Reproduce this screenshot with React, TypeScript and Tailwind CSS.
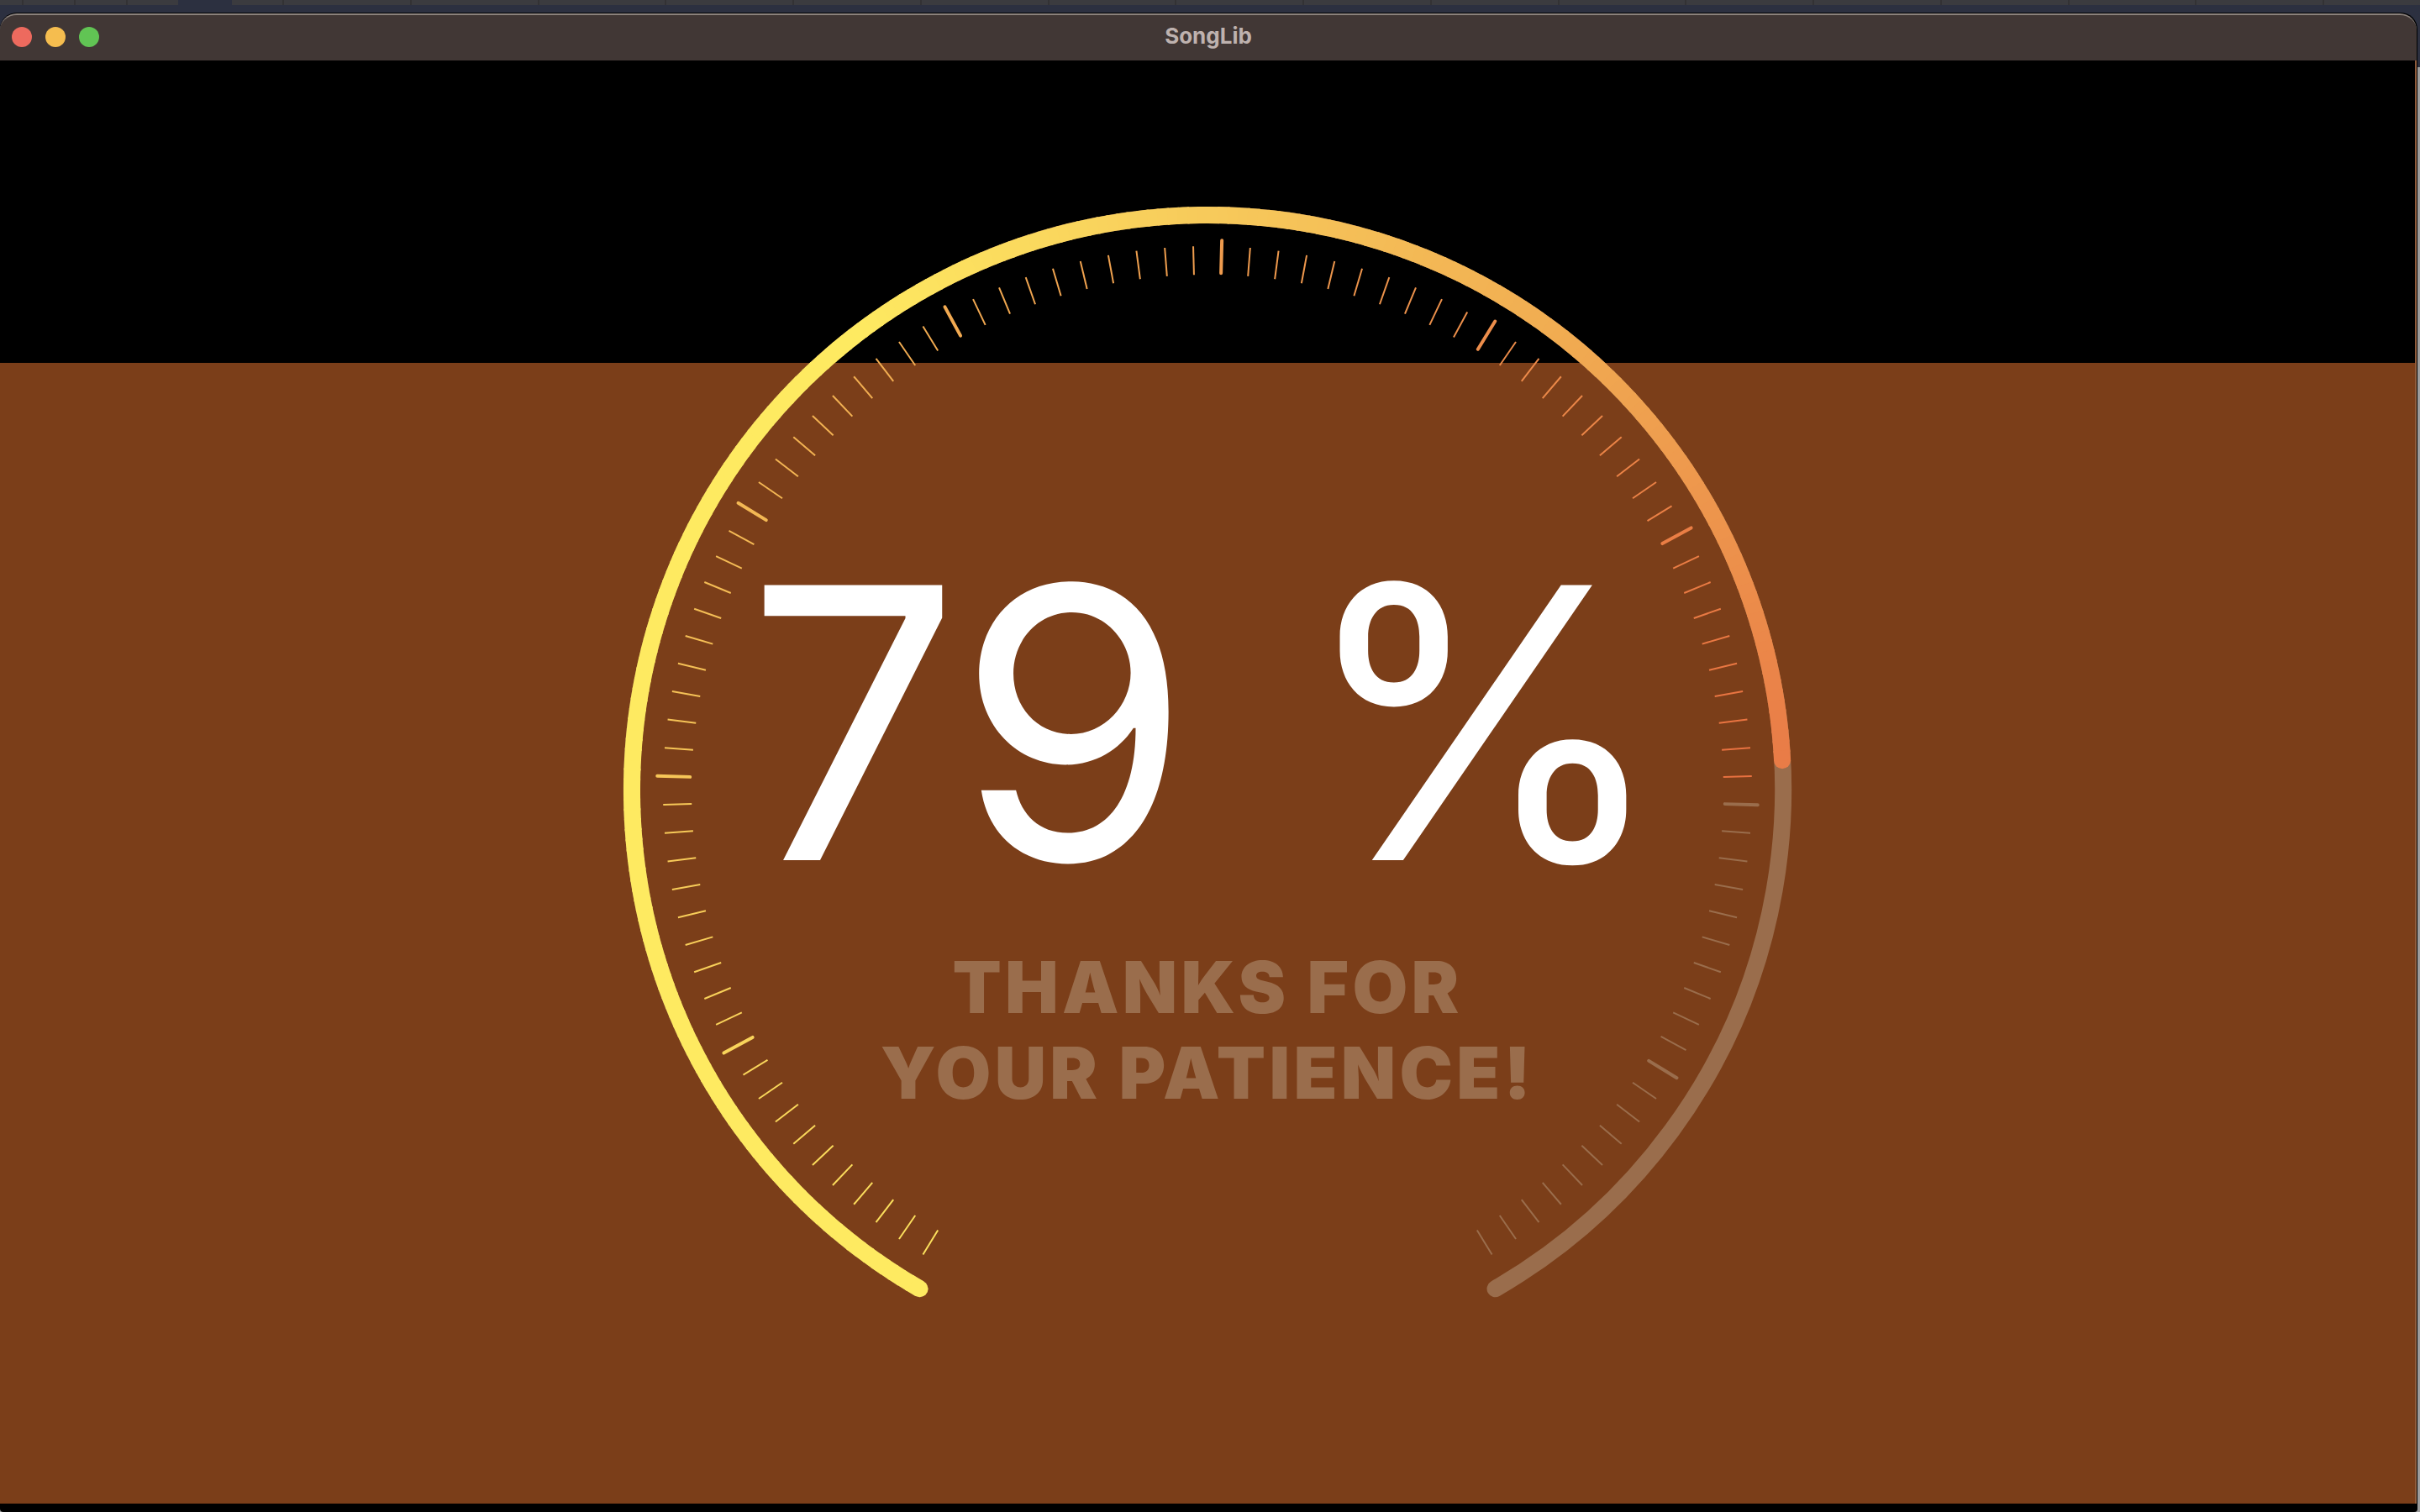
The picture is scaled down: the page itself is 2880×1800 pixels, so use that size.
import React from "react";

type Stop = [number, [number, number, number]];

const CENTER = 700;
const RADIUS = 685;
const PERCENT = 79;
const START = -150;
const SWEEP = 300;

const ARC_STOPS: Stop[] = [
  [-150, [254, 234, 97]],
  [-38, [254, 234, 97]],
  [0, [247, 202, 91]],
  [35, [241, 174, 82]],
  [87, [233, 124, 71]],
];

const TICK_STOPS: Stop[] = [
  [-150, [252, 226, 94]],
  [-90, [246, 199, 88]],
  [-30, [241, 170, 81]],
  [30, [236, 142, 75]],
  [90, [232, 112, 64]],
];

function colorAt(stops: Stop[], angle: number): string {
  for (let i = 1; i < stops.length; i++) {
    const [a0, c0] = stops[i - 1];
    const [a1, c1] = stops[i];
    if (angle <= a1) {
      const t = Math.max(0, (angle - a0) / (a1 - a0));
      const c = c0.map((v, n) => Math.round(v + (c1[n] - v) * t));
      return `rgb(${c.join(",")})`;
    }
  }
  return `rgb(${stops[stops.length - 1][1].join(",")})`;
}

function point(angle: number, r: number): [number, number] {
  const rad = (angle * Math.PI) / 180;
  return [CENTER + r * Math.sin(rad), CENTER - r * Math.cos(rad)];
}

function arc(from: number, to: number): string {
  const [x0, y0] = point(from, RADIUS);
  const [x1, y1] = point(to, RADIUS);
  return `M${x0} ${y0}A${RADIUS} ${RADIUS} 0 ${to - from > 180 ? 1 : 0} 1 ${x1} ${y1}`;
}

function Dial() {
  const end = START + (SWEEP * PERCENT) / 100;
  const segments = Array.from({ length: end - START }, (_, i) => START + i);
  const ticks = Array.from({ length: 100 }, (_, i) => i);
  const [sx, sy] = point(START, RADIUS);
  const [ex, ey] = point(end, RADIUS);

  return (
    <svg viewBox="0 0 1400 1400" className="h-auto w-full [grid-area:1/1]" fill="none" aria-hidden="true">
      <path d={arc(START, START + SWEEP)} stroke="#9a6d4c" strokeWidth="20" strokeLinecap="round" />
      <circle cx={sx} cy={sy} r="10" fill={colorAt(ARC_STOPS, START)} />
      <circle cx={ex} cy={ey} r="10" fill={colorAt(ARC_STOPS, end)} />
      {segments.map((a) => (
        <path key={a} d={arc(a, Math.min(a + 1.2, end))} stroke={colorAt(ARC_STOPS, a + 0.5)} strokeWidth="20" />
      ))}
      {ticks.map((i) => {
        const angle = START + 1.5 + i * 3;
        const major = i > 0 && i % 10 === 0;
        const [x1, y1] = point(angle, major ? 616 : 614);
        const [x2, y2] = point(angle, major ? 655 : 648);
        return (
          <line
            key={i}
            x1={x1}
            y1={y1}
            x2={x2}
            y2={y2}
            stroke={i <= PERCENT ? colorAt(TICK_STOPS, angle) : "#9a6d4c"}
            strokeWidth={major ? 4 : 2}
            strokeLinecap={major ? "round" : "butt"}
          />
        );
      })}
    </svg>
  );
}

function Gauge() {
  return (
    <section
      role="progressbar"
      aria-label="Loading"
      aria-valuenow={PERCENT}
      aria-valuemin={0}
      aria-valuemax={100}
      className="grid w-[1400px] max-w-full"
    >
      <Dial />
      <div className="flex flex-col items-center justify-center gap-10 pt-[84px] text-center [grid-area:1/1]">
        <p className="text-[450px] leading-[448px] whitespace-nowrap text-white">{PERCENT} %</p>
        <p className="text-[85px] leading-[102px] font-black tracking-wider text-[#9a6d4c]">
          THANKS FOR
          <br />
          YOUR PATIENCE!
        </p>
      </div>
    </section>
  );
}

function TitleBar() {
  return (
    <header className="grid h-14 grid-cols-[1fr_auto_1fr] items-center rounded-t-[20px] border-t-2 border-[#8a817c] bg-[#413735] px-3.5 pb-0.5">
      <div className="flex gap-4">
        <button aria-label="Close" className="size-6 rounded-full bg-[#ed6a5e]" />
        <button aria-label="Minimize" className="size-6 rounded-full bg-[#f5bd4f]" />
        <button aria-label="Zoom" className="size-6 rounded-full bg-[#61c454]" />
      </div>
      <h1 className="pb-0.5 text-[26px] leading-8 font-bold text-[#beb2af]">SongLib</h1>
    </header>
  );
}

function DesktopStrip() {
  return (
    <div className="-mr-[3px] flex h-[15px] items-start">
      <div className="grid h-1.5 w-[212px] grid-cols-[26px_60px_60px_60px] gap-0.5 bg-[#333234]">
        {[0, 1, 2, 3].map((i) => (
          <div key={i} className="bg-[#3b3b3f]" />
        ))}
      </div>
      <div className="ml-16 flex h-1.5 flex-1 gap-0.5 bg-[#333234]">
        <div className="w-[60px] bg-[#3b3b3f]" />
        {Array.from({ length: 16 }, (_, i) => (
          <div key={i} className="flex-1 bg-[#3b3b3f]" />
        ))}
        <div className="w-[114px] bg-[#3b3b3f]" />
      </div>
    </div>
  );
}

export default function App() {
  return (
    <div className="flex min-h-screen flex-col bg-[linear-gradient(#2c3040_80px,#9c9c9c_80px)] pr-[3px] font-['Inter',sans-serif]">
      <DesktopStrip />
      <div className="flex flex-1 flex-col rounded-t-[20px] rounded-b-[4px] border-t border-r border-black bg-black">
        <TitleBar />
        <main className="flex flex-1 items-center justify-center border-r-2 border-[#8f5c3c] bg-[linear-gradient(#000_360px,#7b3e19_360px)] pt-5">
          <Gauge />
        </main>
        <footer className="h-2.5" />
      </div>
    </div>
  );
}
